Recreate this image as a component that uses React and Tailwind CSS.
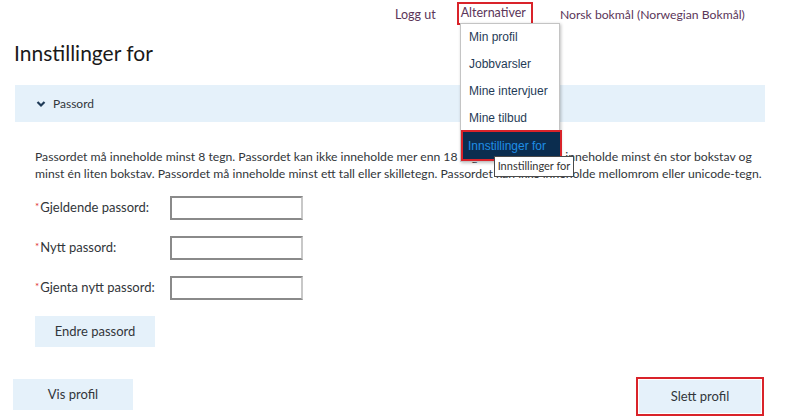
import React from "react";

const body = { fontFamily: 'Lato, "Noto Sans", sans-serif' };
const arial = { fontFamily: '"Liberation Sans", Arial, sans-serif' };

function Field({ label }) {
  return (
    <div className="flex items-center h-[24px]">
      <div className="w-[135px] flex items-center text-[13px] text-[#32363a]">
        <span className="text-[#e0302f] text-[10px] mr-[1px] -mt-[3px]">*</span>
        <span>{label}</span>
      </div>
      <div className="w-[133px] h-[24px] border-2 border-t-[#8a8a8a] border-l-[#8a8a8a] border-b-[#8a8a8a] border-r-[#c8c8c8] bg-white" />
    </div>
  );
}

export default function App() {
  return (
    <div className="relative w-[800px] h-[416px] bg-white overflow-hidden" style={body}>
      {/* top nav */}
      <div className="flex items-center h-[30px] pl-[395px] text-[12.5px] text-[#5b3559]">
        <span>Logg ut</span>
        <span className="ml-[21px] border-2 border-[#d9232a] pl-[2px] pr-[5px] h-[23px] flex items-center -mt-[3px]">Alternativer</span>
        <span className="ml-[27px] text-[12.2px]">Norsk bokmål (Norwegian Bokmål)</span>
      </div>

      {/* heading */}
      <h1 className="pl-[14px] mt-[8px] text-[21px] leading-[30px] text-[#1a1a1a]">Innstillinger for</h1>

      {/* section bar */}
      <div className="ml-[15px] w-[750px] h-[37px] mt-[17px] bg-[#e5f1fa] flex items-center pl-[21px]">
        <svg width="10" height="8" viewBox="0 0 10 8" className="mr-[7px]">
          <path d="M1.5 2 L5 5.5 L8.5 2" stroke="#1f3b57" strokeWidth="2.2" fill="none" />
        </svg>
        <span className="text-[12px] text-[#32363a]">Passord</span>
      </div>

      {/* paragraph */}
      <p className="pl-[35px] pr-[10px] mt-[26px] text-[12.2px] leading-[17px] text-[#32363a] whitespace-nowrap">
        Passordet må inneholde minst 8 tegn. Passordet kan ikke inneholde mer enn 18 tegn. Passordet må inneholde minst én stor bokstav og
        <br />
        minst én liten bokstav. Passordet må inneholde minst ett tall eller skilletegn. Passordet kan ikke inneholde mellomrom eller unicode-tegn.
      </p>

      {/* form */}
      <div className="pl-[35px] mt-[14px] flex flex-col gap-[16px]">
        <Field label="Gjeldende passord:" />
        <Field label="Nytt passord:" />
        <Field label="Gjenta nytt passord:" />
      </div>

      <div className="pl-[35px] mt-[16px]">
        <div className="w-[120px] h-[31px] bg-[#e5f1fa] flex items-center justify-center text-[13px] text-[#32363a]">
          Endre passord
        </div>
      </div>

      <div className="flex items-start justify-between pl-[13px] pr-[36px] mt-[32px]">
        <div className="w-[120px] h-[31px] bg-[#e5f1fa] flex items-center justify-center text-[13px] text-[#32363a]">
          Vis profil
        </div>
        <div className="-mt-[2px] border-2 border-[#d9232a] p-[1px]">
          <div className="w-[122px] h-[33px] bg-[#e5f1fa] flex items-center justify-center text-[13px] text-[#32363a]">
            Slett profil
          </div>
        </div>
      </div>

      {/* dropdown */}
      <div
        className="absolute left-[460px] top-[23px] w-[100px] bg-white border border-[#c4c4c4] shadow-[1px_1px_3px_rgba(0,0,0,0.25)] flex flex-col text-[12px] text-[#1f3b57]"
        style={arial}
      >
        <div className="h-[27px] flex items-center pl-[8px] -mt-[1px]">Min profil</div>
        <div className="h-[27px] flex items-center pl-[8px]">Jobbvarsler</div>
        <div className="h-[27px] flex items-center pl-[8px]">Mine intervjuer</div>
        <div className="h-[27px] flex items-center pl-[8px]">Mine tilbud</div>
        <div className="border-2 border-[#d9232a] ml-0 -mr-[3px] mt-[-1px]">
          <div className="h-[27px] bg-[#0b2d4f] flex items-center pl-[5px] text-[#1f8ee6]">Innstillinger for</div>
        </div>
      </div>

      {/* tooltip */}
      <div className="absolute left-[494px] top-[156px] w-[80px] h-[21px] bg-white border border-[#4a4a4a] flex items-center justify-center text-[11px] text-[#333]">
        Innstillinger for
      </div>
    </div>
  );
}
